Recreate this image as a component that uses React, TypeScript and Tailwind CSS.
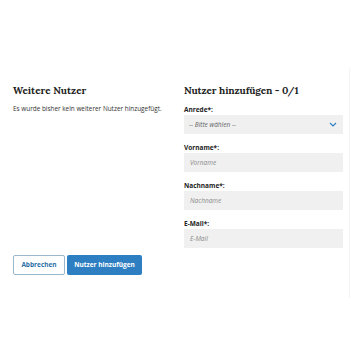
import React from "react";

const serif = "font-['Lora','Liberation_Serif','DejaVu_Serif',serif]";
const sans = "font-['Open_Sans','Liberation_Sans',sans-serif]";

const Field = (props: { label: string; placeholder: string }) => {
  return (
    <div className="flex flex-col">
      <label className="text-[6.5px] font-bold text-[#222] leading-[8px] mb-[1px]">
        {props.label}
      </label>
      <input
        placeholder={props.placeholder}
        className="h-[19px] w-full bg-[#f0f0f0] px-[6px] text-[6.5px] italic placeholder:text-[#8a8a8a] outline-none"
      />
    </div>
  );
};

const App = () => {
  return (
    <div className={`w-[350px] h-[350px] bg-white ${sans} relative`}>
      <div className="absolute right-0 top-[68px] h-[230px] w-px bg-[#f4f4f4]" />
      <div className="grid grid-cols-[159px_159px] gap-x-[12px] pl-[13px] pt-[84px]">
        {/* left */}
        <div className="flex flex-col justify-between h-[191px]">
          <div>
            <h2 className={`${serif} font-bold text-[10px] leading-[14px] text-[#222]`}>
              Weitere Nutzer
            </h2>
            <p className="mt-[6px] text-[6.4px] leading-[9px] text-[#333]">
              Es wurde bisher kein weiterer Nutzer hinzugefügt.
            </p>
          </div>
          <div className="flex gap-[2px]">
            <button className="h-[20px] w-[52px] border border-[#9bb7cc] rounded-[2px] text-[6.5px] font-bold text-[#2a6fa8] bg-white">
              Abbrechen
            </button>
            <button className="h-[20px] w-[75px] rounded-[2px] bg-[#2d7fc1] text-[6.5px] font-bold text-white">
              Nutzer hinzufügen
            </button>
          </div>
        </div>
        {/* right */}
        <div className="flex flex-col">
          <h2 className={`${serif} font-bold text-[10px] tracking-[-0.1px] leading-[14px] text-[#222]`}>
            Nutzer hinzufügen - 0/1
          </h2>
          <div className="mt-[8px] flex flex-col gap-[10px]">
            <div className="flex flex-col">
              <label className="text-[6.5px] font-bold text-[#222] leading-[8px] mb-[1px]">
                Anrede*:
              </label>
              <div className="h-[19px] bg-[#f0f0f0] flex items-center justify-between pl-[5px] pr-[6px]">
                <span className="text-[6.5px] italic text-[#666]">-- Bitte wählen --</span>
                <svg width="8" height="5" viewBox="0 0 8 5">
                  <path d="M1 1 L4 4 L7 1" fill="none" stroke="#2d7fc1" strokeWidth="1.2" />
                </svg>
              </div>
            </div>
            <Field label="Vorname*:" placeholder="Vorname" />
            <Field label="Nachname*:" placeholder="Nachname" />
            <Field label="E-Mail*:" placeholder="E-Mail" />
          </div>
        </div>
      </div>
    </div>
  );
};

export default App;
